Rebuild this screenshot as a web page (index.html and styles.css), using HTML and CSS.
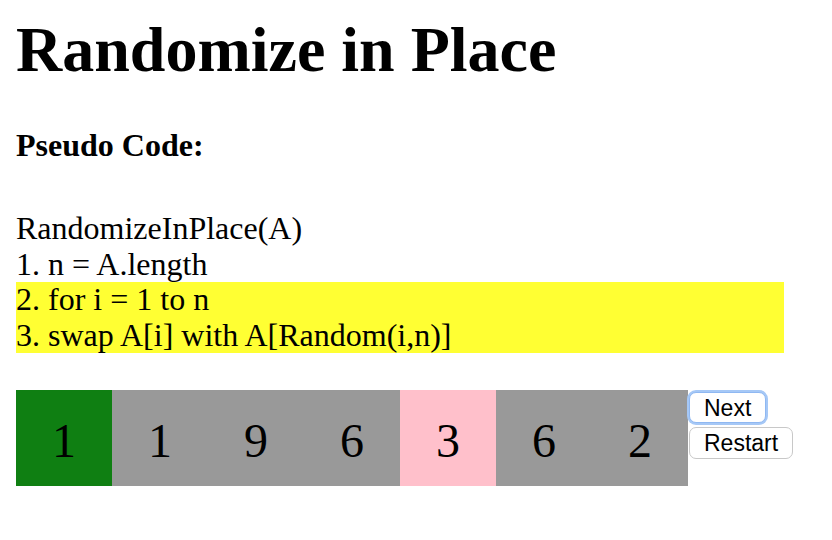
FILE: index.html
```html
<!DOCTYPE html>
<html>
<head>
<meta charset="utf-8">
<link rel="stylesheet" href="styles.css">
</head>
<body>
<div class="page">
  <h1 class="title">Randomize in Place</h1>
  <h4 class="subtitle">Pseudo Code:</h4>
  <div class="code">
    <div class="line">RandomizeInPlace(A)</div>
    <div class="line">1. n = A.length</div>
    <div class="hl">
      <div class="line">2. for i = 1 to n</div>
      <div class="line">3. swap A[i] with A[Random(i,n)]</div>
    </div>
  </div>
  <div class="array-row">
    <div class="cells">
      <div class="cell done">1</div>
      <div class="cell">1</div>
      <div class="cell">9</div>
      <div class="cell">6</div>
      <div class="cell pick">3</div>
      <div class="cell">6</div>
      <div class="cell">2</div>
    </div>
    <div class="buttons">
      <button class="btn focus">Next</button>
      <button class="btn">Restart</button>
    </div>
  </div>
</div>
</body>
</html>
```

FILE: styles.css
```css
html, body {
  margin: 0;
  padding: 0;
  background: #ffffff;
}
.page {
  padding: 15px 16px 0 16px;
  font-family: "Liberation Serif", "Times New Roman", serif;
  color: #000;
}
.title {
  margin: 0 0 42px 0;
  font-size: 64px;
  font-weight: bold;
  line-height: 70.8px;
}
.subtitle {
  margin: 0 0 48px 0;
  font-size: 32px;
  font-weight: bold;
  line-height: 35.4px;
}
.code {
  width: 768px;
  font-size: 32px;
  line-height: 35.5px;
  margin: 0 0 37px 0;
}
.hl {
  background: #ffff33;
}
.array-row {
  display: flex;
  align-items: flex-start;
}
.cells {
  display: flex;
}
.cell {
  width: 96px;
  height: 96px;
  box-sizing: border-box;
  padding-top: 5.5px;
  line-height: 90.5px;
  text-align: center;
  font-size: 48px;
  background: #999999;
}
.cell.done {
  background: #0f7f12;
}
.cell.pick {
  background: #ffc0cb;
}
.buttons {
  display: flex;
  flex-direction: column;
  align-items: flex-start;
  gap: 4px;
  margin: 2px 0 0 1px;
}
.btn {
  font-family: "Liberation Sans", Arial, sans-serif;
  font-size: 23px;
  height: 32px;
  padding: 0 14px;
  background: #ffffff;
  border: 1px solid #c8c8c8;
  border-radius: 7px;
  color: #000;
  line-height: 30px;
}
.btn.focus {
  border-color: #8fb8f2;
  box-shadow: 0 0 0 2px #a6c8f6;
  height: 31px;
}
```
